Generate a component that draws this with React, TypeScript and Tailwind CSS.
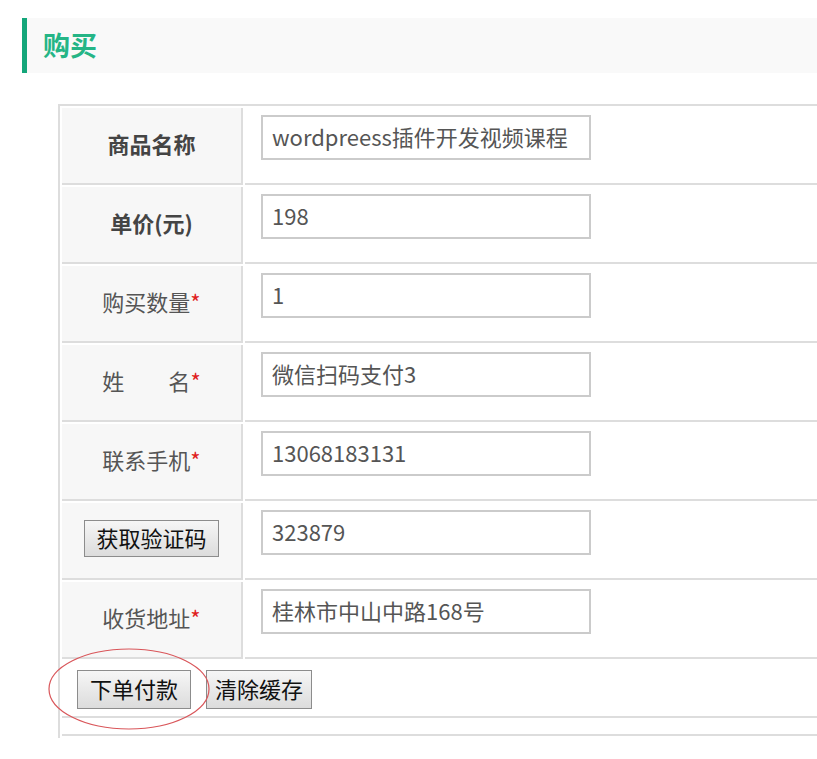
import React from "react";

const font = { fontFamily: '"Noto Sans CJK SC", "Liberation Sans", sans-serif' };

type Row = { label: React.ReactNode; value: string };

const Star = () => <span className="text-[#e02020]">*</span>;

const rows: Row[] = [
  { label: <b className="font-bold text-[#444]">商品名称</b>, value: "wordpreess插件开发视频课程" },
  { label: <b className="font-bold text-[#444]">单价(元)</b>, value: "198" },
  { label: <>购买数量<Star /></>, value: "1" },
  { label: <>姓{"\u3000\u3000"}名<Star /></>, value: "微信扫码支付3" },
  { label: <>联系手机<Star /></>, value: "13068183131" },
  {
    label: (
      <button className="h-[37px] w-[135px] border border-[#8c8c8c] bg-gradient-to-b from-[#f6f6f6] to-[#dcdcdc] pb-[3px] text-[22px] leading-none text-[#111]">
        获取验证码
      </button>
    ),
    value: "323879",
  },
  { label: <>收货地址<Star /></>, value: "桂林市中山中路168号" },
];

const App: React.FC = () => {
  return (
    <div className="w-[817px] h-[759px] overflow-hidden bg-white text-[#555]" style={font}>
      <div className="ml-[22px] mt-[18px] flex h-[55px] items-center border-l-[5px] border-[#14a67a] bg-[#f9f9f9] pl-[16px]">
        <span className="pb-[2px] text-[27px] font-bold leading-none text-[#25b586]">购买</span>
      </div>

      <div className="relative ml-[58px] mt-[31px] w-[900px]">
        <table className="w-full border-separate border-spacing-[2px] border-l-2 border-t-2 border-[#ddd]">
          <tbody>
            {rows.map((r, i) => (
              <tr key={i}>
                <td className="h-[77px] w-[181px] border-b-2 border-r-2 border-[#ddd] bg-[#f7f7f7] p-0 pb-[4px] text-center align-middle text-[22px]">
                  {r.label}
                </td>
                <td className="h-[77px] border-b-2 border-[#ddd] p-0 pl-[16px] pt-[7px] align-top">
                  <div className="flex h-[45px] w-[330px] items-center border-2 border-[#cbcbcb] bg-white pb-[3px] pl-[9px] text-[22px] text-[#555]">
                    {r.value}
                  </div>
                </td>
              </tr>
            ))}
            <tr>
              <td colSpan={2} className="h-[57px] border-b-2 border-[#ddd] p-0 pl-[15px] align-top pt-[9px]">
                <div className="flex gap-[15px]">
                  <button className="h-[39px] w-[114px] border border-[#8c8c8c] bg-gradient-to-b from-[#f6f6f6] to-[#dcdcdc] pb-[3px] text-[22px] leading-none text-[#111]">
                    下单付款
                  </button>
                  <button className="h-[39px] w-[106px] border border-[#8c8c8c] bg-gradient-to-b from-[#f6f6f6] to-[#dcdcdc] pb-[3px] text-[22px] leading-none text-[#111]">
                    清除缓存
                  </button>
                </div>
              </td>
            </tr>
            <tr>
              <td colSpan={2} className="h-[16px] border-b-2 border-[#ddd] p-0" />
            </tr>
          </tbody>
        </table>
        <svg className="absolute left-[-11px] top-[543px]" width="166" height="84" viewBox="0 0 166 84">
          <ellipse cx="82" cy="42" rx="80" ry="40" fill="none" stroke="#d9565a" strokeWidth="1.2" />
        </svg>
      </div>
    </div>
  );
};

export default App;
